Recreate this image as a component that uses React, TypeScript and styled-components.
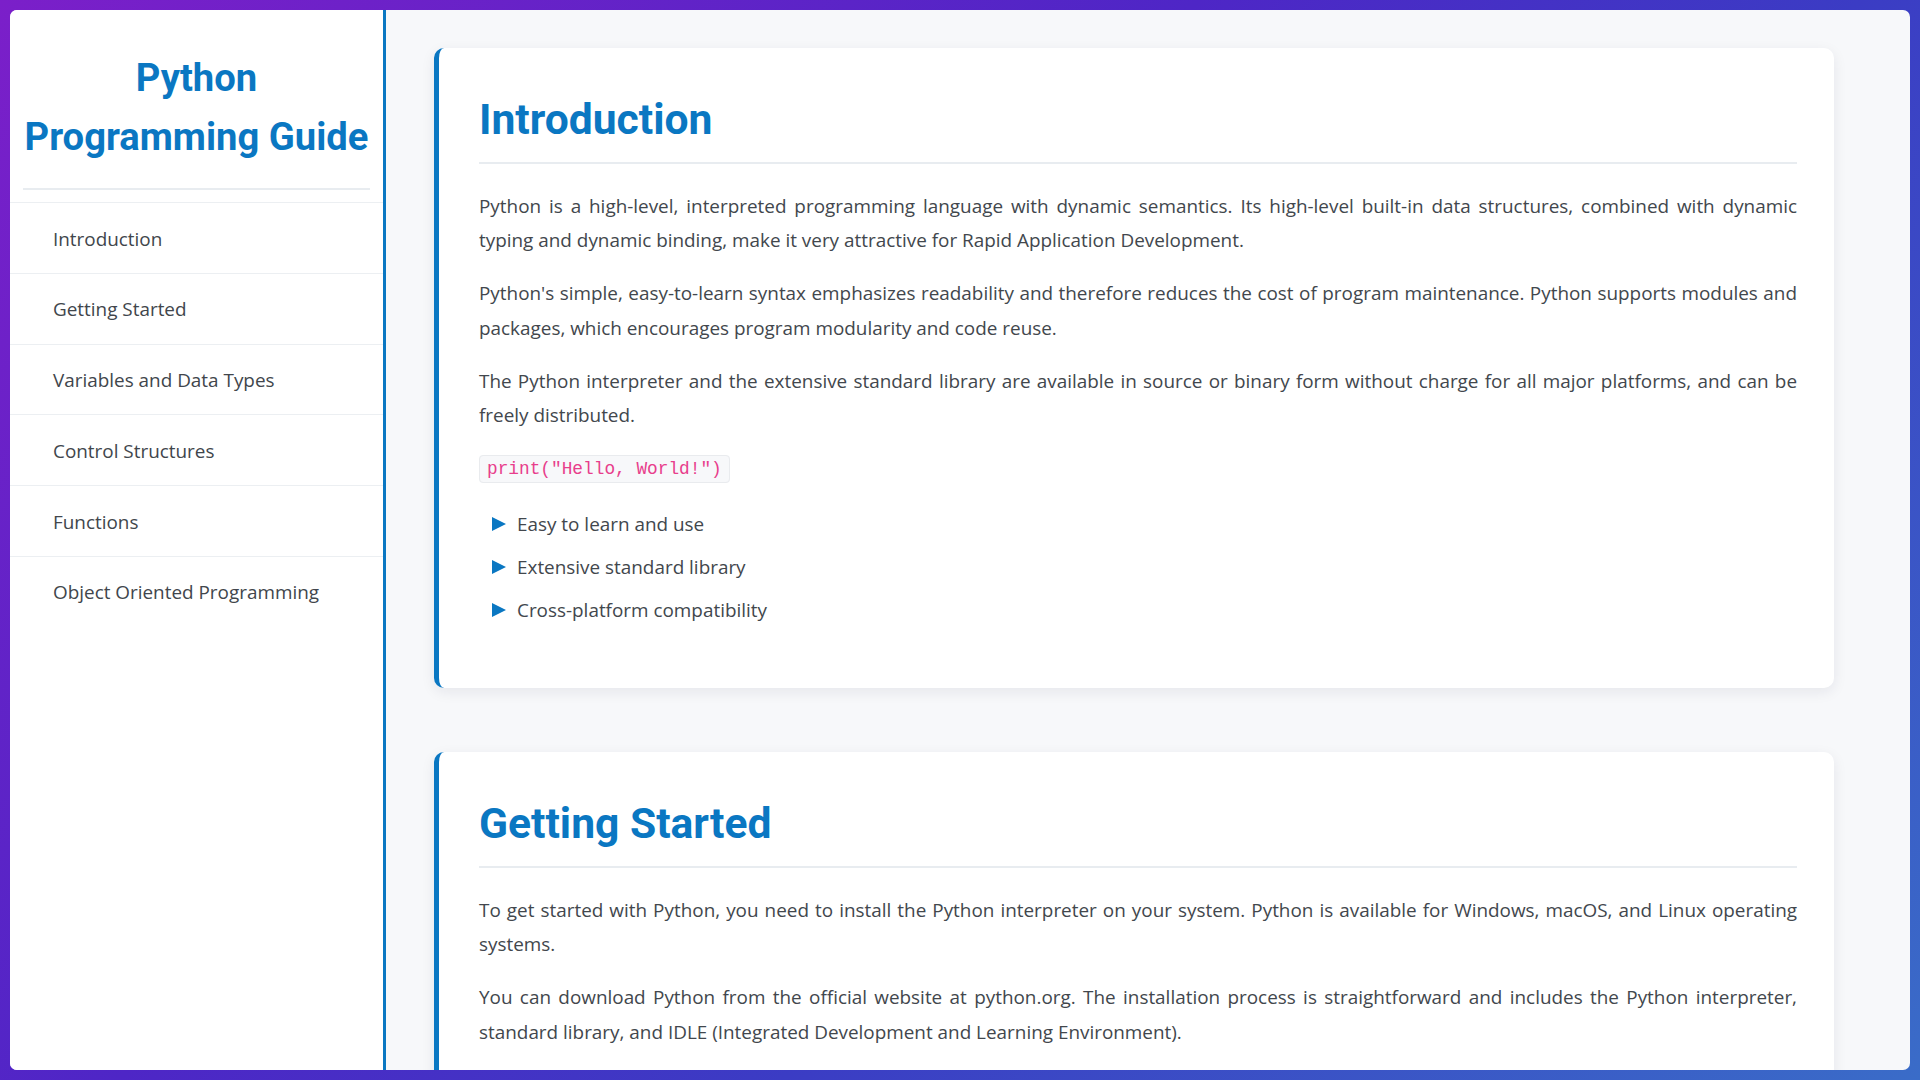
import React from "react";
import styled, { createGlobalStyle } from "styled-components";

const GlobalStyle = createGlobalStyle`
  html, body, #root {
    height: 100%;
  }
  * {
    box-sizing: border-box;
  }
  body {
    margin: 0;
    padding: 10px;
    overflow: hidden;
    font-family: "Open Sans", "Noto Sans", sans-serif;
    background: linear-gradient(135deg, #7b1fc9 0%, #4e26c6 40%, #3b3cc4 62%, #3a6cc8 100%);
  }
`;

const Shell = styled.div`
  display: flex;
  height: 100%;
  border-radius: 7px;
  overflow: hidden;
  background: #f7f8fa;
`;

const Sidebar = styled.aside`
  flex: 0 0 376px;
  background: #ffffff;
  border-right: 3px solid #0a77c2;
  display: flex;
  flex-direction: column;
`;

const SidebarHeader = styled.header`
  margin: 0 13px 12px;
  padding: 39px 0 22px;
  border-bottom: 2px solid #e8ecf0;
  text-align: center;
`;

const SiteTitle = styled.h1`
  margin: 0;
  font-family: Roboto, "Open Sans", sans-serif;
  font-weight: 700;
  font-size: 38.2px;
  line-height: 58.5px;
  color: #0a77c2;
`;

const NavList = styled.ul`
  list-style: none;
  margin: 0;
  padding: 0;
`;

const NavItem = styled.li`
  border-top: 1px solid #eceff2;
  padding: 18.6px 0 16.6px 43px;
  font-size: 18.9px;
  line-height: 34.56px;
  color: #41464c;
  cursor: pointer;
`;

const Main = styled.main`
  flex: 1;
  overflow: hidden;
  padding: 38px 48px;
`;

const Card = styled.section`
  max-width: 1400px;
  background: #ffffff;
  border-left: 5px solid #0a77c2;
  border-radius: 10px;
  padding: 40px 37px 40px 40px;
  margin-bottom: 64px;
  box-shadow: 0 4px 14px rgba(20, 30, 60, 0.08);
`;

const CardTitle = styled.h2`
  margin: 0 0 24.7px;
  padding-bottom: 12px;
  border-bottom: 2px solid #e8ecf0;
  font-family: Roboto, "Open Sans", sans-serif;
  font-weight: 700;
  font-size: 42.6px;
  line-height: 62px;
  color: #0a77c2;
`;

const Paragraph = styled.p`
  margin: 0 0 18.4px;
  font-size: 18.9px;
  line-height: 34.56px;
  color: #42474d;
  text-align: justify;
`;

const CodeLine = styled.p`
  margin: 0 0 15.8px;
  line-height: 34.56px;
`;

const Code = styled.code`
  font-family: "Liberation Mono", "Courier New", monospace;
  font-size: 17.8px;
  color: #e83e8c;
  background: #f7f8fa;
  border: 1px solid #e9ebee;
  border-radius: 4px;
  padding: 3px 7px;
`;

const FeatureList = styled.ul`
  list-style: none;
  margin: 0 0 16.6px;
  padding: 0;
`;

const FeatureItem = styled.li`
  position: relative;
  padding: 4.2px 0 4.2px 38px;
  font-size: 18.9px;
  line-height: 34.56px;
  color: #42474d;

  &::before {
    content: "";
    position: absolute;
    left: 13px;
    top: 50%;
    transform: translateY(-50%);
    width: 0;
    height: 0;
    border-left: 14px solid #0a77c2;
    border-top: 7.5px solid transparent;
    border-bottom: 7.5px solid transparent;
  }
`;

const navItems = [
  "Introduction",
  "Getting Started",
  "Variables and Data Types",
  "Control Structures",
  "Functions",
  "Object Oriented Programming",
];

export default function App() {
  return (
    <>
      <GlobalStyle />
      <Shell>
        <Sidebar>
          <SidebarHeader>
            <SiteTitle>
              Python
              <br />
              Programming Guide
            </SiteTitle>
          </SidebarHeader>
          <NavList>
            {navItems.map((item) => (
              <NavItem key={item}>{item}</NavItem>
            ))}
          </NavList>
        </Sidebar>
        <Main>
          <Card>
            <CardTitle>Introduction</CardTitle>
            <Paragraph>
              Python is a high-level, interpreted programming language with dynamic semantics. Its
              high-level built-in data structures, combined with dynamic typing and dynamic binding,
              make it very attractive for Rapid Application Development.
            </Paragraph>
            <Paragraph>
              Python's simple, easy-to-learn syntax emphasizes readability and therefore reduces the
              cost of program maintenance. Python supports modules and packages, which encourages
              program modularity and code reuse.
            </Paragraph>
            <Paragraph>
              The Python interpreter and the extensive standard library are available in source or
              binary form without charge for all major platforms, and can be freely distributed.
            </Paragraph>
            <CodeLine>
              <Code>print("Hello, World!")</Code>
            </CodeLine>
            <FeatureList>
              <FeatureItem>Easy to learn and use</FeatureItem>
              <FeatureItem>Extensive standard library</FeatureItem>
              <FeatureItem>Cross-platform compatibility</FeatureItem>
            </FeatureList>
          </Card>
          <Card>
            <CardTitle>Getting Started</CardTitle>
            <Paragraph>
              To get started with Python, you need to install the Python interpreter on your system.
              Python is available for Windows, macOS, and Linux operating systems.
            </Paragraph>
            <Paragraph>
              You can download Python from the official website at python.org. The installation
              process is straightforward and includes the Python interpreter, standard library, and
              IDLE (Integrated Development and Learning Environment).
            </Paragraph>
          </Card>
        </Main>
      </Shell>
    </>
  );
}
